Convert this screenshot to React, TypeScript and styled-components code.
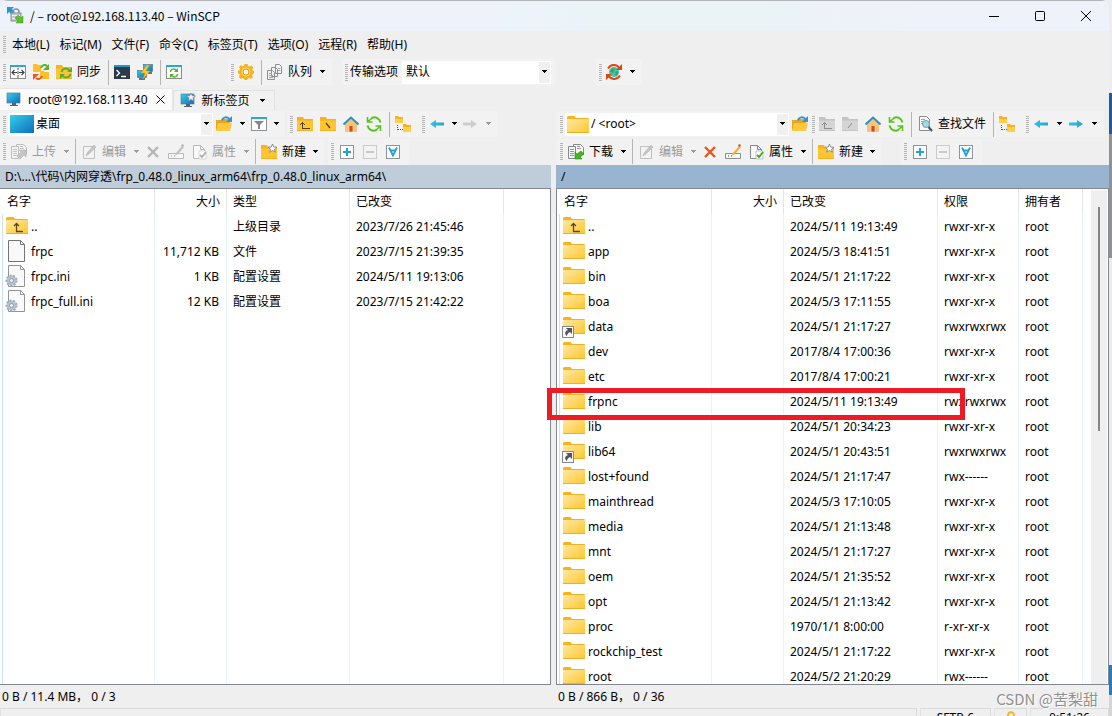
import React from "react";
import styled, { createGlobalStyle, css } from "styled-components";

const GlobalStyle = createGlobalStyle`
  * { box-sizing: border-box; }
  html, body, #root { height: 100%; }
  body {
    margin: 0;
    overflow: hidden;
    font: 12px/16px "Noto Sans", "Noto Sans CJK SC", sans-serif;
    color: #000;
    background: linear-gradient(
      #ececf1 0 93px, #1d5b9b 93px 134px, #909194 134px 258px,
      #ececec 258px 665px, #1c7fca 665px 695px, #d5d5d5 695px);
  }
  button, select, input { font: inherit; color: inherit; }
`;

/* ---------- window frame ---------- */

const Window = styled.div`
  display: flex;
  flex-direction: column;
  height: 100vh;
  margin-right: 3px;
  background: #efefef;
  border-radius: 8px 8px 0 0;
  overflow: hidden;
  position: relative;
`;

const TitleBar = styled.header`
  display: flex;
  align-items: center;
  flex: none;
  height: 31px;
  padding: 0 0 1px 7px;
  border-top: 1px solid #b2b4b8;
  background: linear-gradient(90deg, #eef3fb 0 45%, #ebf3f7 55% 68%, #eef2fa 82%);
`;

const Title = styled.h1`
  flex: 1;
  margin: 0 0 0 6px;
  font: 12px/16px "Noto Sans CJK SC", sans-serif;
`;

const WindowButton = styled.button`
  display: grid;
  place-items: center;
  width: 46px;
  height: 30px;
  padding: 0;
  border: 0;
  background: none;
`;

const MenuBar = styled.nav`
  display: flex;
  align-items: center;
  flex: none;
  height: 27px;
  padding-left: 3px;
`;

const MenuButton = styled.button`
  padding: 0 5px;
  border: 0;
  background: none;
  white-space: nowrap;
`;

/* ---------- toolbars ---------- */

const ToolRow = styled.div<{ $h: number }>`
  display: flex;
  align-items: center;
  flex: none;
  height: ${(p) => p.$h}px;
  min-width: 0;
`;

const Band = styled.div<{ $gap?: number; $end?: number }>`
  display: flex;
  align-items: center;
  flex: none;
  height: 26px;
  margin-left: ${(p) => p.$gap ?? 0}px;
  padding: 0 ${(p) => p.$end ?? 4}px 0 3px;
  background: #f2f2f2;
`;

const Grip = styled.span<{ $near?: boolean }>`
  flex: none;
  width: 3px;
  height: 17px;
  margin-right: ${(p) => (p.$near ? 1 : 2)}px;
  background: repeating-linear-gradient(#b4b4b4 0 1px, transparent 1px 2px);
`;

const Separator = styled.span`
  flex: none;
  width: 1px;
  height: 25px;
  margin: 0 2px 0 3px;
  background: #b5b5b5;
`;

const ToolButton = styled.button`
  display: flex;
  align-items: center;
  flex: none;
  gap: 5px;
  height: 22px;
  padding: 0 4px 0 3px;
  border: 0;
  background: none;
  white-space: nowrap;
  &:disabled { color: #9b9b9b; }
`;

const CaretButton = styled.button<{ $tight?: boolean }>`
  display: grid;
  place-items: center;
  flex: none;
  width: ${(p) => (p.$tight ? 10 : 12)}px;
  height: 22px;
  padding: 0;
  border: 0;
  background: none;
  &:disabled { color: #9b9b9b; }
`;

const Combo = styled.div<{ $w: number }>`
  display: flex;
  align-items: center;
  flex: none;
  width: ${(p) => p.$w}px;
  height: 23px;
  padding: 1px 1px 1px 2px;
  background: #fff;
`;

const ComboSelect = styled.select`
  appearance: none;
  flex: 1;
  min-width: 0;
  height: 20px;
  padding: 0 2px;
  border: 0;
  background: none;
  outline: none;
`;

const ComboArrow = styled.span`
  display: grid;
  place-items: center;
  width: 11px;
  height: 21px;
  background: #f0f0f0;
`;

const FieldLabel = styled.label`
  margin-right: 4px;
`;

/* ---------- tabs ---------- */

const TabRow = styled.div`
  display: flex;
  align-items: flex-end;
  flex: none;
  height: 24px;
`;

const Tab = styled.div<{ $active?: boolean }>`
  display: flex;
  align-items: center;
  height: ${(p) => (p.$active ? 22 : 20)}px;
  padding: 0 6px;
  border: 1px solid #e2e2e2;
  border-bottom: 0;
  background: #f1f1f1;
  ${(p) => p.$active && css`
    background: #fafafa;
    border-color: #e6e6e6;
    border-left: 0;
  `}
`;

const TabLabel = styled.button`
  display: flex;
  align-items: center;
  gap: 6px;
  padding: 0;
  border: 0;
  background: none;
  white-space: nowrap;
`;

const TabAction = styled.button`
  display: grid;
  place-items: center;
  width: 10px;
  height: 16px;
  margin-left: 8px;
  padding: 0;
  border: 0;
  background: none;
`;

/* ---------- file panels ---------- */

const Panels = styled.main`
  display: grid;
  grid-template-columns: minmax(0, 551fr) minmax(0, 553fr);
  column-gap: 5px;
  flex: 1;
  min-height: 0;
`;

const Panel = styled.section`
  display: flex;
  flex-direction: column;
  position: relative;
  min-width: 0;
  min-height: 0;
`;

const PathBar = styled.div<{ $active?: boolean }>`
  flex: none;
  height: 23px;
  padding: 4px 5px;
  white-space: nowrap;
  overflow: hidden;
  background: ${(p) => (p.$active ? "#99b4d1" : "#bfcddb")};
`;

const ListBox = styled.div<{ $leftBorder?: boolean }>`
  display: flex;
  flex: 1;
  min-height: 0;
  overflow: hidden;
  border: 1px solid #828790;
  border-left-width: ${(p) => (p.$leftBorder ? 1 : 0)}px;
  background: #fff;
`;

const FileTable = styled.table`
  flex: 1;
  width: 100%;
  height: 100%;
  table-layout: fixed;
  border-collapse: separate;
  border-spacing: 0;
`;

const HeadCell = styled.th<{ $right?: boolean }>`
  height: 25px;
  padding: 0 6px;
  border-right: 1px solid #e5e5e5;
  font-weight: 400;
  text-align: ${(p) => (p.$right ? "right" : "left")};
  white-space: nowrap;
  &:first-child { padding-left: 7px; }
  &:last-child { border-right: 0; }
`;

const Cell = styled.td<{ $right?: boolean }>`
  height: 25px;
  padding: 0 7px 0 6px;
  border-right: 1px solid #e9f3fc;
  text-align: ${(p) => (p.$right ? "right" : "left")};
  white-space: nowrap;
  &:last-child { border-right: 0; }
  &:first-child {
    padding-left: 5px;
    background: linear-gradient(90deg, transparent 2px, #cde4f8 2px 3px, transparent 3px);
  }
`;

const NameBox = styled.div`
  display: flex;
  align-items: center;
`;

const FillerCell = styled(Cell)`
  height: auto;
`;

const ScrollTrack = styled.div`
  flex: none;
  width: 16px;
  margin: 1px 1px 0 0;
  padding: 17px 7px 0;
  background: #efefef;
`;

const ScrollThumb = styled.div`
  height: 47%;
  background: #868686;
`;

const PanelStatus = styled.div`
  flex: none;
  height: 23px;
  padding: 4px 2px 0;
`;

const Highlight = styled.div`
  position: absolute;
  left: -9px;
  top: 278px;
  width: 418px;
  height: 32px;
  border: 5px solid #ed1c24;
`;

/* ---------- bottom bar ---------- */

const StatusBar = styled.footer`
  display: flex;
  flex: none;
  gap: 3px;
  height: 8px;
`;

const StatusCell = styled.div<{ $w?: number }>`
  flex: ${(p) => (p.$w ? "none" : 1)};
  width: ${(p) => (p.$w ? p.$w + "px" : "auto")};
  height: 22px;
  padding-top: 1px;
  border: 1px solid #dadada;
  border-left-color: #e2e2e2;
  text-align: center;
`;

const Watermark = styled.div`
  position: absolute;
  right: 11px;
  bottom: 7px;
  font: 15px/20px "Noto Sans CJK SC", sans-serif;
  color: #909090;
  text-shadow: 1px 1px 0 #fff;
`;

/* ---------- icons ---------- */

type IconProps = { children: React.ReactNode; w?: number; h?: number };
const Icon = ({ children, w = 16, h = 16 }: IconProps) => (
  <svg width={w} height={h} viewBox={`0 0 ${w} ${h}`} fill="none" aria-hidden="true">{children}</svg>
);

const Caret = () => (
  <Icon w={7} h={4}><path d="M1 0h5v1H5v1H4v1H3V2H2V1H1z" fill="currentColor" /></Icon>
);

const Gradients = () => (
  <svg width="0" height="0" style={{ position: "absolute" }} aria-hidden="true">
    <defs>
      <linearGradient id="folder" x1="0" y1="0" x2="1" y2="1">
        <stop offset="0" stopColor="#ffe9a6" /><stop offset="1" stopColor="#ffc72e" />
      </linearGradient>
      <linearGradient id="screen" x1="0" y1="0" x2="1" y2="1">
        <stop offset="0" stopColor="#35d0e6" /><stop offset="1" stopColor="#0d6cc0" />
      </linearGradient>
      <linearGradient id="cyan" x1="0" y1="0" x2="1" y2="0">
        <stop offset="0" stopColor="#2fc3e4" /><stop offset="1" stopColor="#2aa5cf" />
      </linearGradient>
    </defs>
  </svg>
);

const SmallFolder = ({ gray, children }: { gray?: boolean; children?: React.ReactNode }) => (
  <Icon>
    <path d="M0 1h6l1 2h9v12H0z" fill={gray ? "#c4c4c4" : "#f9b21c"} />
    <path d="M0 4.500h16V14H0z" fill={gray ? "#d5d5d5" : "#fdc531"} />
    {children}
  </Icon>
);
const UpMark = <path d="M5.500 12V6.500M3 9l2.500-2.500L8 9M5 12.500h8" stroke="#4f4226" strokeWidth="1" />;
const UpMarkGray = <path d="M5.500 12V6.500M3 9l2.500-2.500L8 9M5 12.500h8" stroke="#8e8e8e" />;

const AppLogo = () => (
  <Icon w={17} h={17}>
    <path d="M0 0h7L5 2l3 3-3 3-3-3-2 2z" fill="#1f9ad6" />
    <path d="M6 7V5c0-4 6-4 6 0v2" stroke="#8a929c" strokeWidth="1.500" />
    <rect x="4" y="6" width="10" height="8" fill="#c3c8cf" stroke="#858d98" />
    <path d="M5 8.500h8M5 11.500h8" stroke="#eef0f2" />
    <path d="M16 16H9l2-2-3-3 3-3 3 3 2-2z" fill="#58c322" stroke="#3c9a15" strokeWidth=".5" />
  </Icon>
);
const CompareIcon = () => (
  <Icon>
    <rect x=".5" y="1.500" width="15" height="13" fill="#fff" stroke="#8a8a8a" />
    <path d="M0 1h16v2H0z" fill="#28a9d6" />
    <path d="M8 4v2M8 7v3M8 11v3" stroke="#555" />
    <path d="M2 8.500h5M9 8.500h5M4.500 6l-2.500 2.500L4.500 11M11.500 6L14 8.500 11.500 11" stroke="#444" strokeWidth="1.200" />
  </Icon>
);
const SyncIcon = () => (
  <Icon>
    <path d="M0 0h4l1 1h3v7H0zM7 7h4l1 1h4v7H7z" fill="#fdbf2b" />
    <path d="M8 4c1-3 4-4 6-2" stroke="#55b52d" strokeWidth="2" />
    <path d="M16 0v6h-6z" fill="#55b52d" />
    <path d="M9 12c-1 3-4 4-6 2" stroke="#e8562a" strokeWidth="2" />
    <path d="M0 16v-6h6z" fill="#e8562a" />
  </Icon>
);
const SyncFolderIcon = () => (
  <SmallFolder>
    <path d="M5.500 8c1-4 6-4.500 8-1.500M14.500 10c-1 4-6 4.500-8 1.500" stroke="#52ad2c" strokeWidth="1.800" />
    <path d="M16 3v5h-5zM4 15v-5h5z" fill="#52ad2c" />
  </SmallFolder>
);
const TerminalIcon = () => (
  <Icon>
    <path d="M0 1h16v14H0z" fill="#2e3b47" /><path d="M0 1h16v2H0z" fill="#2196c9" />
    <path d="M2.500 6l3 3-3 3M7 12.500h5" stroke="#fff" strokeWidth="1.300" />
  </Icon>
);
const PuttyIcon = () => (
  <Icon>
    <rect x="6.500" y=".5" width="9" height="7" fill="url(#screen)" stroke="#4b6a80" strokeWidth=".6" />
    <rect x=".5" y="6.500" width="9" height="7" fill="url(#screen)" stroke="#4b6a80" strokeWidth=".6" />
    <path d="M11 9h4M2 15h6" stroke="#66727c" strokeWidth="2" />
    <path d="M10 1L4 9h4l-2 6 7-8H9l3-6z" fill="#ffc62b" stroke="#e69f11" strokeWidth=".5" />
  </Icon>
);
const RefreshWindowIcon = () => (
  <Icon>
    <rect x=".5" y="1.500" width="15" height="13" fill="#fff" stroke="#8a8a8a" />
    <path d="M0 1h16v2H0z" fill="#28a9d6" />
    <path d="M4.500 8c0-3 4-4 6-1.500M11.500 10c0 3-4 4-6 1.500" stroke="#4fb425" strokeWidth="1.400" />
    <path d="M12 4v4H8zM4 14v-4h4z" fill="#4fb425" />
  </Icon>
);
const GearIcon = () => (
  <Icon>
    <path d="M6.500 0h3l.5 2 1.500.6L13.400 1.500l1.800 1.900-1 1.900.5 1.200 1.300.5v2.500l-1.500.6-.5 1.300.9 1.900-1.900 1.800-1.800-1-1.500.6-.7 1.300h-2.500l-.6-1.500-1.400-.5-1.900.9L.8 13l1-1.900-.5-1.200L0 9.300V6.800l1.500-.6.5-1.400-1-1.700 1.900-1.800 1.800 1L6 2z" fill="#f7b21d" />
    <circle cx="8" cy="8" r="4.500" fill="#ffd468" /><circle cx="8" cy="8" r="3" fill="#f3f3f3" stroke="#e09b12" />
  </Icon>
);
const QueueIcon = () => (
  <Icon>
    <path d="M8.500 .5h4l2 2v7h-6zM4.500 3.500h4l2 2v7h-6zM.5 6.500h5l2 2v7h-7z" fill="#f1f1f1" stroke="#8c8f92" />
    <path d="M2 9.500h3M2 11.500h4M2 13.500h4M11 4.500h2M11 6.500h2" stroke="#a1a4a7" />
  </Icon>
);
const GlobeIcon = () => (
  <Icon>
    <circle cx="8" cy="8" r="5" fill="#31c5d8" />
    <path d="M5 5l3-1 1 2-2 3-3-1zM9 8l3-1v3l-2 3z" fill="#4ba82f" />
    <path d="M2 4.500c3-4.500 8-4.500 11-1M14 11.500c-3 4.500-8 4.500-11 1" stroke="#e2430c" strokeWidth="2" />
    <path d="M16 0v6h-6zM0 16v-6h6z" fill="#e2430c" />
  </Icon>
);
const MonitorIcon = ({ star }: { star?: boolean }) => (
  <Icon>
    <rect x="1" y="1" width="13" height="10" fill="url(#screen)" stroke="#5b7c94" strokeWidth=".7" />
    <path d="M6 11h4v2H6zM4 13h8v1H4z" fill="#56616b" />
    {star && <path d="M11 0l1.300 2.700 3.200.3-2.400 2 .8 3-2.900-1.500L8.200 8l.8-3-2.500-2 3.200-.3z" fill="#e8eef2" stroke="#7b8b98" strokeWidth=".8" />}
  </Icon>
);
const DesktopIcon = () => <Icon w={24} h={18}><path d="M0 0h24v18H0z" fill="url(#screen)" /></Icon>;
const OpenFolderIcon = () => (
  <Icon>
    <path d="M0 4h5l1-1h8v11H0z" fill="#efa516" />
    <path d="M2 7h14l-2 8H0z" fill="#ffc93f" />
    <path d="M6 4.500c1-4 5-4 7.500-1.500" stroke="#2b97cf" strokeWidth="1.800" />
    <path d="M16 0v6h-6z" fill="#2b97cf" />
  </Icon>
);
const FilterIcon = () => (
  <Icon>
    <rect x=".5" y="1.500" width="15" height="13" fill="#fff" stroke="#8d9296" />
    <path d="M0 1h16v2H0z" fill="#28a9d6" />
    <path d="M3 5h10l-4 4v4H7V9z" fill="#85898c" />
  </Icon>
);
const HomeIcon = () => (
  <Icon>
    <path d="M2 8l6-6 6 6v8H2z" fill="#f6c377" />
    <path d="M6 9.500h4V16H6z" fill="#d9471c" stroke="#fbe3c0" strokeWidth=".7" />
    <path d="M.5 8.500L8 1.500l7.500 7" stroke="#2b93c4" strokeWidth="2" />
  </Icon>
);
const RefreshIcon = () => (
  <Icon>
    <path d="M5.500 2.200C9 .2 13.500 2 14.500 6.500M10.500 13.800C7 15.800 2.500 14 1.500 9.500" stroke="#55c41b" strokeWidth="2" />
    <path d="M1.500 1v5h5M1.500 6l4.500-4M14.500 15v-5h-5M14.500 10l-4.500 4" stroke="#55c41b" strokeWidth="1.600" />
  </Icon>
);
const TreeIcon = () => (
  <Icon>
    <path d="M0 0h3l1 1h4v6H0zM8 8h3l1 1h4v7H8z" fill="#f9b21c" />
    <path d="M0 3h8v4H0zM8 11h8v5H8z" fill="#ffce4b" />
    <path d="M2.500 9v5M3 13.500h5" stroke="#555" strokeDasharray="1 1" />
  </Icon>
);
const ArrowIcon = ({ dir, gray }: { dir: "left" | "right"; gray?: boolean }) => (
  <Icon>
    <path d={dir === "left" ? "M1 8l6-4v2.500h8v3H7V12z" : "M15 8L9 4v2.500H1v3h8V12z"} fill={gray ? "#cdcdcd" : "url(#cyan)"} />
  </Icon>
);
const TransferIcon = ({ gray, up }: { gray?: boolean; up?: boolean }) => (
  <Icon>
    <path d="M5.500 .5h7l3 3v7h-10z" fill="#f7f7f7" stroke={gray ? "#bdbdbd" : "#85888b"} />
    <path d="M.5 2.500h7v12h-7z" fill="#f4f4f4" stroke={gray ? "#bdbdbd" : "#85888b"} />
    <path d="M2 5.500h4M2 7.500h4M2 9.500h4M2 11.500h4M9 4.500h4M9 2.500h3" stroke={gray ? "#c4c4c4" : "#96999c"} />
    {up
      ? <path d="M8 6h7v7l-2-2-4 4-3-3 4-4z" fill="#c6c6c6" stroke="#b0b0b0" strokeWidth=".6" />
      : <path d="M7 8v7h7l-2-2 4-3-3-3-4 3z" fill="#43b51f" stroke="#2e8914" strokeWidth=".6" />}
  </Icon>
);
const EditIcon = () => (
  <Icon>
    <path d="M2.500 2.500h11v12h-11z" stroke="#c0c0c0" fill="#f3f3f3" />
    <path d="M5 12l1-3 7-8 2 2-7 7z" fill="#c4c4c4" stroke="#b0b0b0" strokeWidth=".5" />
  </Icon>
);
const DeleteIcon = ({ gray }: { gray?: boolean }) => (
  <Icon><path d="M3 3l10 10M13 3L3 13" stroke={gray ? "#b5b5b5" : "#e4561f"} strokeWidth="2.400" /></Icon>
);
const RenameIcon = ({ gray }: { gray?: boolean }) => (
  <Icon>
    <path d="M.5 9.500h15v5H.5z" fill="#f8f8f8" stroke={gray ? "#b9b9b9" : "#8d8d8d"} />
    <path d="M3.500 11v2M6.500 11v2" stroke={gray ? "#c5c5c5" : "#9a9a9a"} />
    <path d="M7 12l1-3 6-7 2 1-6 7z" fill={gray ? "#c0c0c0" : "#f9b31e"} />
    <path d="M13 2l1-2 2 1-1 2z" fill={gray ? "#b5b5b5" : "#d5502a"} />
  </Icon>
);
const PropsIcon = ({ gray }: { gray?: boolean }) => (
  <Icon>
    <path d="M2.500 1.500h7l4 4v9h-11zM9.500 1.500v4h4" fill="#f8f8f8" stroke={gray ? "#b9b9b9" : "#85888b"} />
    <path d="M8 7h7v8H8z" fill="#fff" stroke={gray ? "#c4c4c4" : "#a3a6a9"} strokeWidth=".6" />
    <path d="M9 11l2 2 4-5" stroke={gray ? "#b3b3b3" : "#46ad22"} strokeWidth="2" />
  </Icon>
);
const NewFolderIcon = () => (
  <SmallFolder>
    <path d="M11.500 0l1.200 3 3.300.2-2.500 2 .8 3-2.800-1.700L8.700 8.200l.8-3L7 3.200l3.300-.2z" fill="#fff" stroke="#7e848a" strokeWidth=".9" />
  </SmallFolder>
);
const BoxIcon = ({ kind }: { kind: "plus" | "minus" | "tri" }) => (
  <Icon>
    <rect x="1.500" y="1.500" width="13" height="13" fill={kind === "minus" ? "#f3f3f3" : "#fff"} stroke={kind === "minus" ? "#cbcbcb" : "#8f9499"} />
    {kind === "plus" && <path d="M4 8h8M8 4v8" stroke="#22a3d3" strokeWidth="2" />}
    {kind === "minus" && <path d="M4 8h8" stroke="#c9c9c9" strokeWidth="2" />}
    {kind === "tri" && <path d="M4 3.500l4 8 4-8M5.500 6.500h5" stroke="#22a3d3" strokeWidth="1.800" />}
  </Icon>
);
const FindIcon = () => (
  <Icon>
    <path d="M2.500 .5h7l3 3v11h-10z" fill="#fafafa" stroke="#8a8d90" />
    <path d="M4 3.500h4M4 5.500h3M4 7.500h2" stroke="#a1a4a7" />
    <circle cx="9" cy="8" r="3.500" fill="#9fdcea" stroke="#7e9aa5" />
    <path d="M11.500 11l3.500 4" stroke="#4a5258" strokeWidth="2" />
  </Icon>
);

type FileKind = "up" | "folder" | "link" | "file" | "config";
const FolderArt = () => (
  <>
    <path d="M0 1.500Q0 0 1.500 0h6L9 2v2H0z" fill="#f8b318" />
    <path d="M0 3h9l1-1h11q1 0 1 1v14H0z" fill="url(#folder)" />
    <path d="M9 2.500h12.500M0 16.500h22" stroke="#eeb025" />
  </>
);
const FileIcon = ({ kind }: { kind: FileKind }) => (
  <Icon w={26} h={25}>
    {(kind === "up" || kind === "folder" || kind === "link") && <g transform="translate(1 3)"><FolderArt /></g>}
    {kind === "up" && <path d="M11.500 17.500V9.500M9 12l2.500-2.500L14 12M11 17.500h7" stroke="#5c4714" strokeWidth="1.300" />}
    {kind === "link" && (
      <>
        <rect x=".5" y="12.500" width="11" height="11" fill="#f8f8f8" stroke="#85888b" />
        <path d="M4 14h6v6l-2-2c-2 1-3 2-3 4-3-2-2-5 1-6z" fill="#50555c" />
      </>
    )}
    {(kind === "file" || kind === "config") && (
      <path d="M3.500 1.500h12l4 4v17h-16zM15.500 1.500v4h4" fill="#f9f9f9" stroke={kind === "file" ? "#737373" : "#939393"} />
    )}
    {kind === "config" && (
      <>
        <circle cx="6.500" cy="16.500" r="5" fill="#b9c6d2" stroke="#9dabb8" strokeWidth="2" strokeDasharray="2 1.500" />
        <circle cx="6.500" cy="16.500" r="2" fill="#f0f4f7" stroke="#8497a8" />
      </>
    )}
  </Icon>
);

/* ---------- composed parts ---------- */

type ToolProps = { icon: React.ReactNode; label: string; text?: boolean; disabled?: boolean };
const Tool = ({ icon, label, text, disabled }: ToolProps) => (
  <ToolButton aria-label={label} disabled={disabled}>{icon}{text && label}</ToolButton>
);
const Drop = ({ label, disabled, tight }: { label: string; disabled?: boolean; tight?: boolean }) => (
  <CaretButton aria-label={label} disabled={disabled} $tight={tight}><Caret /></CaretButton>
);

const ActionBar = ({ remote }: { remote?: boolean }) => {
  const off = !remote;
  return (
    <ToolRow $h={27}>
      <Band $gap={remote ? 1 : 0}>
        <Grip />
        <Tool icon={<TransferIcon gray={off} up={off} />} label={remote ? "下载" : "上传"} text disabled={off} />
        <Drop label="传输菜单" disabled={off} />
        <Separator />
        <Tool icon={<EditIcon />} label="编辑" text disabled />
        <Drop label="编辑菜单" disabled />
        <Tool icon={<DeleteIcon gray={off} />} label="删除" disabled={off} />
        <Tool icon={<RenameIcon gray={off} />} label="重命名" disabled={off} />
        <Tool icon={<PropsIcon gray={off} />} label="属性" text disabled={off} />
        <Drop label="属性菜单" disabled={off} />
        <Separator />
        <Tool icon={<NewFolderIcon />} label="新建" text />
        <Drop label="新建菜单" tight />
      </Band>
      <Band $gap={remote ? 20 : 4}>
        <Grip />
        <Tool icon={<BoxIcon kind="plus" />} label="选择" />
        <Tool icon={<BoxIcon kind="minus" />} label="取消选择" disabled />
        <Tool icon={<BoxIcon kind="tri" />} label="反选" />
      </Band>
    </ToolRow>
  );
};

const MENUS = ["本地(L)", "标记(M)", "文件(F)", "命令(C)", "标签页(T)", "选项(O)", "远程(R)", "帮助(H)"];

type FileRow = [FileKind, string, string, ...string[]];
const LOCAL: FileRow[] = [
  ["up", "..", "", "上级目录", "2023/7/26 21:45:46"],
  ["file", "frpc", "11,712 KB", "文件", "2023/7/15 21:39:35"],
  ["config", "frpc.ini", "1 KB", "配置设置", "2024/5/11 19:13:06"],
  ["config", "frpc_full.ini", "12 KB", "配置设置", "2023/7/15 21:42:22"],
];
const RX = "rwxr-xr-x";
const REMOTE: FileRow[] = [
  ["up", "..", "", "2024/5/11 19:13:49", RX, "root"],
  ["folder", "app", "", "2024/5/3 18:41:51", RX, "root"],
  ["folder", "bin", "", "2024/5/1 21:17:22", RX, "root"],
  ["folder", "boa", "", "2024/5/3 17:11:55", RX, "root"],
  ["link", "data", "", "2024/5/1 21:17:27", "rwxrwxrwx", "root"],
  ["folder", "dev", "", "2017/8/4 17:00:36", RX, "root"],
  ["folder", "etc", "", "2017/8/4 17:00:21", RX, "root"],
  ["folder", "frpnc", "", "2024/5/11 19:13:49", "rwxrwxrwx", "root"],
  ["folder", "lib", "", "2024/5/1 20:34:23", RX, "root"],
  ["link", "lib64", "", "2024/5/1 20:43:51", "rwxrwxrwx", "root"],
  ["folder", "lost+found", "", "2024/5/1 21:17:47", "rwx------", "root"],
  ["folder", "mainthread", "", "2024/5/3 17:10:05", RX, "root"],
  ["folder", "media", "", "2024/5/1 21:13:48", RX, "root"],
  ["folder", "mnt", "", "2024/5/1 21:17:27", RX, "root"],
  ["folder", "oem", "", "2024/5/1 21:35:52", RX, "root"],
  ["folder", "opt", "", "2024/5/1 21:13:42", RX, "root"],
  ["folder", "proc", "", "1970/1/1 8:00:00", "r-xr-xr-x", "root"],
  ["folder", "rockchip_test", "", "2024/5/1 21:17:22", RX, "root"],
  ["folder", "root", "", "2024/5/2 21:20:29", "rwx------", "root"],
];

type TableProps = { label: string; heads: string[]; widths: number[]; rows: FileRow[]; fill?: boolean };
const Files = ({ label, heads, widths, rows, fill }: TableProps) => (
  <FileTable aria-label={label}>
    <colgroup>{widths.map((w, i) => <col key={i} width={w} />)}<col /></colgroup>
    <thead>
      <tr>{heads.map((h, i) => <HeadCell key={h} $right={i === 1}>{h}</HeadCell>)}<HeadCell as="td" /></tr>
    </thead>
    <tbody>
      {rows.map(([kind, name, ...rest]) => (
        <tr key={name}>
          <Cell><NameBox><FileIcon kind={kind} />{name}</NameBox></Cell>
          {rest.map((v, i) => <Cell key={i} $right={i === 0}>{v}</Cell>)}
          <Cell />
        </tr>
      ))}
      {fill && <tr>{heads.map((h) => <FillerCell key={h} />)}<FillerCell /></tr>}
    </tbody>
  </FileTable>
);

export default function App() {
  return (
    <Window>
      <GlobalStyle />
      <Gradients />
      <TitleBar>
        <AppLogo />
        <Title>/ – root@192.168.113.40 – WinSCP</Title>
        <WindowButton aria-label="最小化"><Icon w={10} h={10}><path d="M0 5.500h10" stroke="#000" /></Icon></WindowButton>
        <WindowButton aria-label="最大化"><Icon w={10} h={10}><rect x=".5" y=".5" width="9" height="9" rx="1" stroke="#000" /></Icon></WindowButton>
        <WindowButton aria-label="关闭"><Icon w={10} h={10}><path d="M0 0l10 10M10 0L0 10" stroke="#000" /></Icon></WindowButton>
      </TitleBar>

      <MenuBar>
        <Grip $near />
        {MENUS.map((m) => <MenuButton key={m}>{m}</MenuButton>)}
      </MenuBar>

      <ToolRow $h={28}>
        <Band>
          <Grip $near />
          <Tool icon={<CompareIcon />} label="比较目录" />
          <Tool icon={<SyncIcon />} label="同步浏览" />
          <Tool icon={<SyncFolderIcon />} label="同步" text />
          <Separator />
          <Tool icon={<TerminalIcon />} label="终端" />
          <Tool icon={<PuttyIcon />} label="PuTTY" />
          <Separator />
          <Tool icon={<RefreshWindowIcon />} label="刷新" />
        </Band>
        <Band $gap={38}>
          <Grip $near />
          <Tool icon={<GearIcon />} label="首选项" />
          <Separator />
          <Tool icon={<QueueIcon />} label="队列" text />
          <Drop label="队列菜单" />
        </Band>
        <Band $gap={10}>
          <Grip />
          <FieldLabel htmlFor="transfer">传输选项</FieldLabel>
          <Combo $w={149}>
            <ComboSelect id="transfer"><option>默认</option></ComboSelect>
            <ComboArrow><Caret /></ComboArrow>
          </Combo>
        </Band>
        <Band $gap={41}>
          <Grip $near />
          <Tool icon={<GlobeIcon />} label="重新连接" />
          <Drop label="连接菜单" />
        </Band>
      </ToolRow>

      <TabRow role="tablist">
        <Tab $active>
          <TabLabel role="tab" aria-selected="true"><MonitorIcon />root@192.168.113.40</TabLabel>
          <TabAction aria-label="关闭标签页"><Icon w={9} h={9}><path d="M.5 .5l8 8M8.500 .5l-8 8" stroke="#000" /></Icon></TabAction>
        </Tab>
        <Tab>
          <TabLabel role="tab" aria-selected="false"><MonitorIcon star />新标签页</TabLabel>
          <TabAction aria-label="新标签页菜单"><Caret /></TabAction>
        </Tab>
      </TabRow>

      <Panels>
        <Panel aria-label="本地">
          <ToolRow $h={28}>
            <Band>
              <Grip />
              <Combo $w={205}>
                <DesktopIcon />
                <ComboSelect aria-label="本地驱动器"><option>桌面</option></ComboSelect>
                <ComboArrow><Caret /></ComboArrow>
              </Combo>
              <Tool icon={<OpenFolderIcon />} label="打开目录" />
              <Drop label="打开目录菜单" />
              <Tool icon={<FilterIcon />} label="过滤" />
              <Drop label="过滤菜单" tight />
            </Band>
            <Band $gap={2}>
              <Grip $near />
              <Tool icon={<SmallFolder>{UpMark}</SmallFolder>} label="上级目录" />
              <Tool icon={<SmallFolder><path d="M6 7l4 5" stroke="#4f4226" strokeWidth="1.300" /></SmallFolder>} label="根目录" />
              <Tool icon={<HomeIcon />} label="主目录" />
              <Tool icon={<RefreshIcon />} label="刷新" />
              <Separator />
              <Tool icon={<TreeIcon />} label="目录树" />
            </Band>
            <Band>
              <Grip $near />
              <Tool icon={<ArrowIcon dir="left" />} label="后退" />
              <Drop label="后退菜单" tight />
              <Tool icon={<ArrowIcon dir="right" gray />} label="前进" disabled />
              <Drop label="前进菜单" disabled />
            </Band>
          </ToolRow>
          <ActionBar />
          <PathBar>D:\...\代码\内网穿透\frp_0.48.0_linux_arm64\frp_0.48.0_linux_arm64\</PathBar>
          <ListBox>
            <Files label="本地文件" heads={["名字", "大小", "类型", "已改变"]} widths={[155, 72, 123, 154]} rows={LOCAL} fill />
          </ListBox>
          <PanelStatus>0 B / 11.4 MB， 0 / 3</PanelStatus>
        </Panel>

        <Panel aria-label="远程">
          <ToolRow $h={28}>
            <Band $gap={1}>
              <Grip />
              <Combo $w={224}>
                <Icon w={22} h={17}><FolderArt /></Icon>
                <ComboSelect aria-label="远程目录"><option>/ &lt;root&gt;</option></ComboSelect>
                <ComboArrow><Caret /></ComboArrow>
              </Combo>
              <Tool icon={<OpenFolderIcon />} label="打开目录" />
            </Band>
            <Band $gap={-7}>
              <Grip $near />
              <Tool icon={<SmallFolder gray>{UpMarkGray}</SmallFolder>} label="上级目录" disabled />
              <Tool icon={<SmallFolder gray><path d="M10 7l-4 5" stroke="#8e8e8e" /></SmallFolder>} label="根目录" disabled />
              <Tool icon={<HomeIcon />} label="主目录" />
              <Tool icon={<RefreshIcon />} label="刷新" />
              <Separator />
              <Tool icon={<FindIcon />} label="查找文件" text />
              <Separator />
              <Tool icon={<TreeIcon />} label="目录树" />
            </Band>
            <Band>
              <Grip $near />
              <Tool icon={<ArrowIcon dir="left" />} label="后退" />
              <Drop label="后退菜单" />
              <Tool icon={<ArrowIcon dir="right" />} label="前进" />
              <Drop label="前进菜单" />
            </Band>
          </ToolRow>
          <ActionBar remote />
          <PathBar $active>/</PathBar>
          <ListBox $leftBorder>
            <Files label="远程文件" heads={["名字", "大小", "已改变", "权限", "拥有者"]} widths={[155, 72, 154, 81, 64]} rows={REMOTE} />
            <ScrollTrack aria-hidden="true"><ScrollThumb /></ScrollTrack>
          </ListBox>
          <PanelStatus>0 B / 866 B， 0 / 36</PanelStatus>
          <Highlight />
        </Panel>
      </Panels>

      <StatusBar>
        <StatusCell />
        <StatusCell $w={71}>SFTP-6</StatusCell>
        <StatusCell $w={33}>
          <Icon w={12} h={16}><path d="M3 9V6c0-5 6-5 6 0v3" stroke="#f3b61f" strokeWidth="2" /><rect x="1" y="8" width="10" height="7" fill="#fdc531" /></Icon>
        </StatusCell>
        <StatusCell $w={79}>0:51:26</StatusCell>
      </StatusBar>
      <Watermark>CSDN @苦梨甜</Watermark>
    </Window>
  );
}
